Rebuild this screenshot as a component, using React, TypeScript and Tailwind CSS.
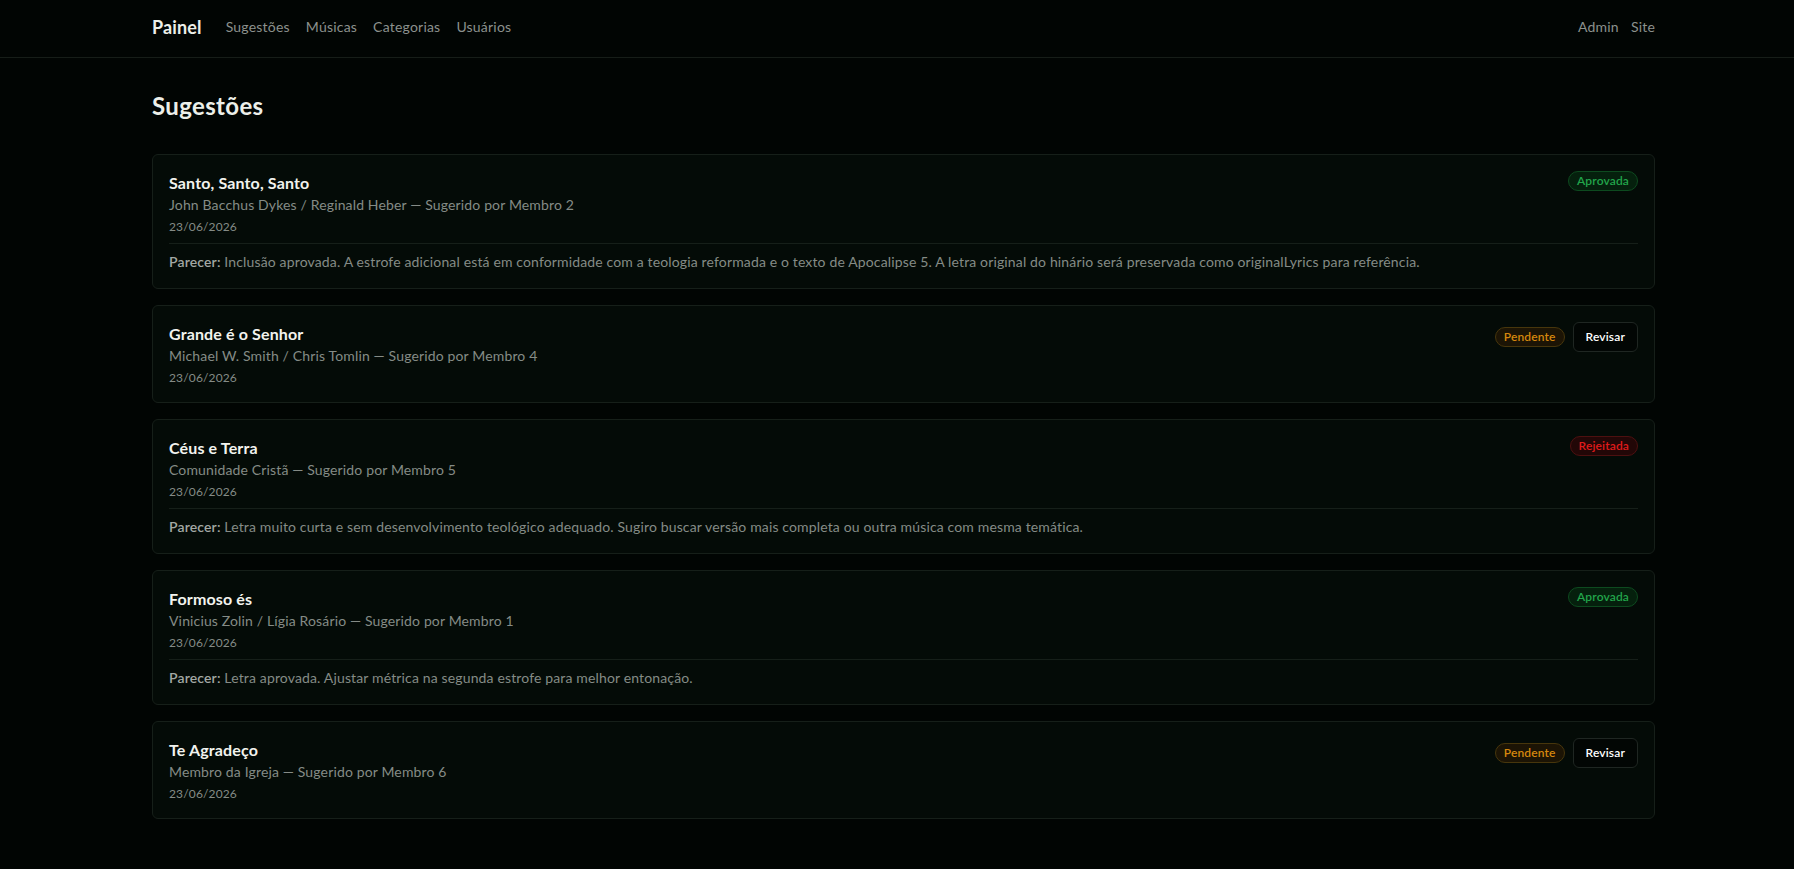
import { useState } from 'react';

type Status = 'Aprovada' | 'Pendente' | 'Rejeitada';

interface Sugestao {
    id: number;
    titulo: string;
    autores: string;
    membro: string;
    data: string;
    status: Status;
    parecer?: string;
}

const sugestoes: Array<Sugestao> = [
    {
        id: 1,
        titulo: 'Santo, Santo, Santo',
        autores: 'John Bacchus Dykes / Reginald Heber',
        membro: 'Membro 2',
        data: '23/06/2026',
        status: 'Aprovada',
        parecer: 'Inclusão aprovada. A estrofe adicional está em conformidade com a teologia reformada e o texto de Apocalipse 5. A letra original do hinário será preservada como originalLyrics para referência.',
    },
    {
        id: 2,
        titulo: 'Grande é o Senhor',
        autores: 'Michael W. Smith / Chris Tomlin',
        membro: 'Membro 4',
        data: '23/06/2026',
        status: 'Pendente',
    },
    {
        id: 3,
        titulo: 'Céus e Terra',
        autores: 'Comunidade Cristã',
        membro: 'Membro 5',
        data: '23/06/2026',
        status: 'Rejeitada',
        parecer: 'Letra muito curta e sem desenvolvimento teológico adequado. Sugiro buscar versão mais completa ou outra música com mesma temática.',
    },
    {
        id: 4,
        titulo: 'Formoso és',
        autores: 'Vinicius Zolin / Lígia Rosário',
        membro: 'Membro 1',
        data: '23/06/2026',
        status: 'Aprovada',
        parecer: 'Letra aprovada. Ajustar métrica na segunda estrofe para melhor entonação.',
    },
    {
        id: 5,
        titulo: 'Te Agradeço',
        autores: 'Membro da Igreja',
        membro: 'Membro 6',
        data: '23/06/2026',
        status: 'Pendente',
    },
];

function StatusBadge({ status }: { status: Status }) {
    if (status === 'Aprovada') {
        return <span className='rounded-full border border-[#0d4a1f] bg-[#05200d] px-2 py-[1px] text-xs font-semibold text-[#22a54b]'>Aprovada</span>;
    }
    if (status === 'Pendente') {
        return <span className='rounded-full border border-[#47360c] bg-[#1c1405] px-2 py-[1px] text-xs font-semibold text-[#d5870d]'>Pendente</span>;
    }
    return <span className='rounded-full border border-[#4d1010] bg-[#220707] px-2 py-[1px] text-xs font-semibold text-[#e01b1b]'>Rejeitada</span>;
}

export default function App() {
    const [lista] = useState(sugestoes);

    return (
        <div className="min-h-screen bg-[#010503] font-['Lato',sans-serif] tracking-[0.009em] text-[#ecefe9]">
            {/* barra de navegação */}
            <header className='h-[58px] border-b border-[#161d18]'>
                <div className='flex h-full items-center pb-[3px] pl-[152px] pr-[139px]'>
                    <span className='text-[18px] font-bold'>Painel</span>
                    <nav className='ml-[24px] flex gap-4 text-sm tracking-[0.015em] text-[#8c918d]'>
                        <a>Sugestões</a>
                        <a>Músicas</a>
                        <a>Categorias</a>
                        <a>Usuários</a>
                    </nav>
                    <div className='ml-auto flex gap-3 text-sm tracking-[0.015em] text-[#8c918d]'>
                        <a>Admin</a>
                        <a>Site</a>
                    </div>
                </div>
            </header>

            <main className='pl-[152px] pr-[139px] pt-8 pb-10'>
                <h1 className='mb-8 text-2xl font-bold tracking-[0.015em]'>Sugestões</h1>
                <div className='flex flex-col gap-4'>
                    {lista.map(s => (
                        <div key={s.id} className='rounded-md border border-[#161f19] bg-[#040b07] p-4'>
                            <div className='flex items-start justify-between'>
                                <div>
                                    <p className='text-base font-bold text-[#f2f3ee]'>{s.titulo}</p>
                                    <p className='text-sm text-[#858b86]'>{s.autores} — Sugerido por {s.membro}</p>
                                    <p className='mt-1 text-xs text-[#858b86]'>{s.data}</p>
                                </div>
                                <div className='flex items-center gap-2'>
                                    <StatusBadge status={s.status} />
                                    {s.status === 'Pendente' && (
                                        <button className='rounded-md border border-[#1f2622] bg-[#020604] px-3 py-1.5 text-xs font-semibold text-white'>
                                            Revisar
                                        </button>
                                    )}
                                </div>
                            </div>
                            {s.parecer && (
                                <div className='mt-2 border-t border-[#161f19] pt-2 text-sm text-[#858b86]'>
                                    <span className='font-semibold text-[#a3a8a4]'>Parecer:</span> {s.parecer}
                                </div>
                            )}
                        </div>
                    ))}
                </div>
            </main>
        </div>
    );
}
